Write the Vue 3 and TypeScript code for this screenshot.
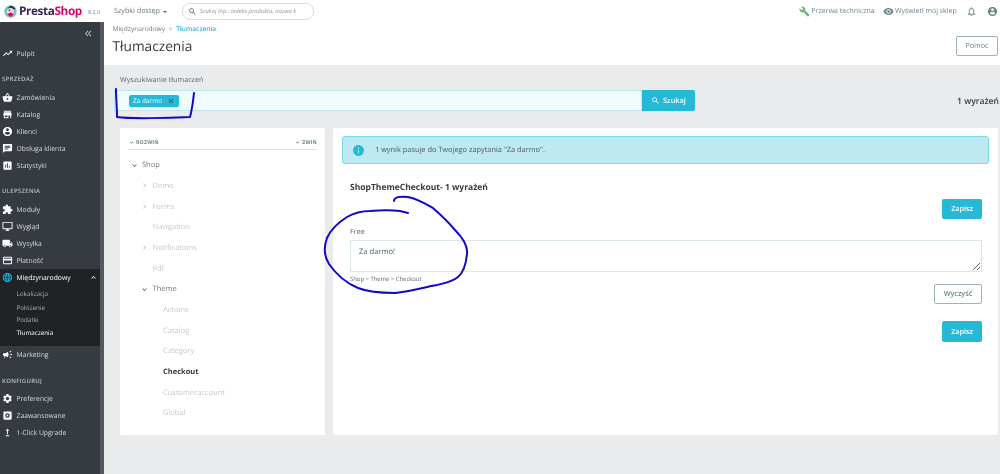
<script setup lang="ts">
const P: Record<string, string> = {
  trend: 'M16 6l2.29 2.29-4.88 4.88-4-4L2 16.59 3.41 18l6-6 4 4 6.3-6.29L22 12V6z',
  basket: 'M17.21 9l-4.38-6.56c-.19-.28-.51-.42-.83-.42-.32 0-.64.14-.83.43L6.79 9H2c-.55 0-1 .45-1 1 0 .09.01.18.04.27l2.54 9.27c.23.84 1 1.46 1.92 1.46h13c.92 0 1.69-.62 1.93-1.46l2.54-9.27L23 10c0-.55-.45-1-1-1h-4.79zM9 9l3-4.4L15 9H9zm3 8c-1.1 0-2-.9-2-2s.9-2 2-2 2 .9 2 2-.9 2-2 2z',
  store: 'M20 4H4v2h16V4zm1 10v-2l-1-5H4l-1 5v2h1v6h10v-6h4v6h2v-6h1zm-9 4H6v-4h6v4z',
  user: 'M12 2C6.48 2 2 6.48 2 12s4.48 10 10 10 10-4.48 10-10S17.52 2 12 2zm0 3c1.66 0 3 1.34 3 3s-1.34 3-3 3-3-1.34-3-3 1.34-3 3-3zm0 14.2c-2.5 0-4.71-1.28-6-3.22.03-1.99 4-3.08 6-3.08 1.99 0 5.97 1.09 6 3.08-1.29 1.94-3.5 3.22-6 3.22z',
  chat: 'M20 2H4c-1.1 0-1.99.9-1.99 2L2 22l4-4h14c1.1 0 2-.9 2-2V4c0-1.1-.9-2-2-2zM6 9h12v2H6V9zm8 5H6v-2h8v2zm4-6H6V6h12v2z',
  stats: 'M19 3H5c-1.1 0-2 .9-2 2v14c0 1.1.9 2 2 2h14c1.1 0 2-.9 2-2V5c0-1.1-.9-2-2-2zM9 17H7v-7h2v7zm4 0h-2V7h2v10zm4 0h-2v-4h2v4z',
  puzzle: 'M20.5 11H19V7c0-1.1-.9-2-2-2h-4V3.5C13 2.12 11.88 1 10.5 1S8 2.12 8 3.5V5H4c-1.1 0-1.99.9-1.99 2v3.8H3.5c1.49 0 2.7 1.21 2.7 2.7s-1.21 2.7-2.7 2.7H2V20c0 1.1.9 2 2 2h3.8v-1.5c0-1.49 1.21-2.7 2.7-2.7 1.49 0 2.7 1.21 2.7 2.7V22H17c1.1 0 2-.9 2-2v-4h1.5c1.38 0 2.5-1.12 2.5-2.5S21.88 11 20.5 11z',
  desktop: 'M21 2H3c-1.1 0-2 .9-2 2v12c0 1.1.9 2 2 2h7v2H8v2h8v-2h-2v-2h7c1.1 0 2-.9 2-2V4c0-1.1-.9-2-2-2zm0 14H3V4h18v12z',
  truck: 'M20 8h-3V4H3c-1.1 0-2 .9-2 2v11h2c0 1.66 1.34 3 3 3s3-1.34 3-3h6c0 1.66 1.34 3 3 3s3-1.34 3-3h2v-5l-3-4zM6 18.5c-.83 0-1.5-.67-1.5-1.5s.67-1.5 1.5-1.5 1.5.67 1.5 1.5-.67 1.5-1.5 1.5zm13.5-9l1.96 2.5H17V9.5h2.5zm-1.5 9c-.83 0-1.5-.67-1.5-1.5s.67-1.5 1.5-1.5 1.5.67 1.5 1.5-.67 1.5-1.5 1.5z',
  card: 'M20 4H4c-1.11 0-1.99.89-1.99 2L2 18c0 1.11.89 2 2 2h16c1.11 0 2-.89 2-2V6c0-1.11-.89-2-2-2zm0 14H4v-6h16v6zm0-10H4V6h16v2z',
  globe: 'M11.99 2C6.47 2 2 6.48 2 12s4.47 10 9.99 10C17.52 22 22 17.52 22 12S17.52 2 11.99 2zm6.93 6h-2.95c-.32-1.25-.78-2.45-1.38-3.56 1.84.63 3.37 1.91 4.33 3.56zM12 4.04c.83 1.2 1.48 2.53 1.91 3.96h-3.82c.43-1.43 1.08-2.76 1.91-3.96zM4.26 14C4.1 13.36 4 12.69 4 12s.1-1.36.26-2h3.38c-.08.66-.14 1.32-.14 2 0 .68.06 1.34.14 2H4.26zm.82 2h2.95c.32 1.25.78 2.45 1.38 3.56-1.84-.63-3.37-1.9-4.33-3.56zm2.95-8H5.08c.96-1.66 2.49-2.93 4.33-3.56C8.81 5.55 8.35 6.75 8.03 8zM12 19.96c-.83-1.2-1.48-2.53-1.91-3.96h3.82c-.43 1.43-1.08 2.76-1.91 3.96zM14.34 14H9.66c-.09-.66-.16-1.32-.16-2 0-.68.07-1.35.16-2h4.68c.09.65.16 1.32.16 2 0 .68-.07 1.34-.16 2zm.25 5.56c.6-1.11 1.06-2.31 1.38-3.56h2.95c-.96 1.65-2.49 2.93-4.33 3.56zM16.36 14c.08-.66.14-1.32.14-2 0-.68-.06-1.34-.14-2h3.38c.16.64.26 1.31.26 2s-.1 1.36-.26 2h-3.38z',
  horn: 'M18 11v2h4v-2h-4zm-2 6.61c.96.71 2.21 1.65 3.2 2.39.4-.53.8-1.07 1.2-1.6-.99-.74-2.24-1.68-3.2-2.4-.4.54-.8 1.08-1.2 1.61zM20.4 5.6c-.4-.53-.8-1.07-1.2-1.6-.99.74-2.24 1.68-3.2 2.4.4.53.8 1.07 1.2 1.6.96-.72 2.21-1.65 3.2-2.4zM4 9c-1.1 0-2 .9-2 2v2c0 1.1.9 2 2 2h1v4h2v-4h1l5 3V6L8 9H4zm11.5 3c0-1.33-.58-2.53-1.5-3.35v6.69c.92-.81 1.5-2.01 1.5-3.34z',
  gear: 'M19.14 12.94c.04-.3.06-.61.06-.94 0-.32-.02-.64-.07-.94l2.03-1.58c.18-.14.23-.41.12-.61l-1.92-3.32c-.12-.22-.37-.29-.59-.22l-2.39.96c-.5-.38-1.03-.7-1.62-.94l-.36-2.54c-.04-.24-.24-.41-.48-.41h-3.84c-.24 0-.43.17-.47.41l-.36 2.54c-.59.24-1.13.57-1.62.94l-2.39-.96c-.22-.08-.47 0-.59.22L2.74 8.87c-.12.21-.08.47.12.61l2.03 1.58c-.05.3-.09.63-.09.94s.02.64.07.94l-2.03 1.58c-.18.14-.23.41-.12.61l1.92 3.32c.12.22.37.29.59.22l2.39-.96c.5.38 1.03.7 1.62.94l.36 2.54c.05.24.24.41.48.41h3.84c.24 0 .44-.17.47-.41l.36-2.54c.59-.24 1.13-.56 1.62-.94l2.39.96c.22.08.47 0 .59-.22l1.92-3.32c.12-.22.07-.47-.12-.61l-2.01-1.58zM12 15.6c-1.98 0-3.6-1.62-3.6-3.6s1.62-3.6 3.6-3.6 3.6 1.62 3.6 3.6-1.62 3.6-3.6 3.6z',
  adv: 'M19 3H5c-1.1 0-2 .9-2 2v14c0 1.1.9 2 2 2h14c1.1 0 2-.9 2-2V5c0-1.1-.9-2-2-2zm-7 14a5 5 0 110-10 5 5 0 010 10zm0-3a2 2 0 100-4 2 2 0 000 4z',
  upgrade: 'M16 18v2H8v-2h8zM11 7.99V16h2V7.99h3L12 4 8 7.99h3z',
  wrench: 'M22.7 19l-9.1-9.1c.9-2.3.4-5-1.5-6.9-2-2-5-2.4-7.4-1.3L9 6 6 9 1.6 4.7C.4 7.1.9 10.1 2.9 12.1c1.9 1.9 4.6 2.4 6.9 1.5l9.1 9.1c.4.4 1 .4 1.4 0l2.3-2.3c.5-.4.5-1.1.1-1.4z',
  eye: 'M12 4.5C7 4.5 2.73 7.61 1 12c1.73 4.39 6 7.5 11 7.5s9.27-3.11 11-7.5c-1.73-4.39-6-7.5-11-7.5zM12 17c-2.76 0-5-2.24-5-5s2.24-5 5-5 5 2.24 5 5-2.24 5-5 5zm0-8c-1.66 0-3 1.34-3 3s1.34 3 3 3 3-1.34 3-3-1.34-3-3-3z',
  bell: 'M12 22c1.1 0 2-.9 2-2h-4c0 1.1.9 2 2 2zm6-6v-5c0-3.07-1.63-5.64-4.5-6.32V4c0-.83-.67-1.5-1.5-1.5s-1.5.67-1.5 1.5v.68C7.64 5.36 6 7.92 6 11v5l-2 2v1h16v-1l-2-2zm-2 1H8v-6c0-2.48 1.51-4.5 4-4.5s4 2.02 4 4.5v6z',
  search: 'M15.5 14h-.79l-.28-.27C15.41 12.59 16 11.11 16 9.5 16 5.91 13.09 3 9.5 3S3 5.91 3 9.5 5.91 16 9.5 16c1.61 0 3.09-.59 4.23-1.57l.27.28v.79l5 4.99L20.49 19l-4.99-5zm-6 0C7.01 14 5 11.99 5 9.5S7.01 5 9.5 5 14 7.01 14 9.5 11.99 14 9.5 14z',
  info: 'M12 2C6.48 2 2 6.48 2 12s4.48 10 10 10 10-4.48 10-10S17.52 2 12 2zm1 15h-2v-6h2v6zm0-8h-2V7h2v2z',
  close: 'M19 6.41L17.59 5 12 10.59 6.41 5 5 6.41 10.59 12 5 17.59 6.41 19 12 13.41 17.59 19 19 17.59 13.41 12z',
  down: 'M7.41 8.59L12 13.17l4.59-4.58L18 10l-6 6-6-6z',
  up: 'M7.41 15.41L12 10.83l4.59 4.58L18 14l-6-6-6 6z',
  right: 'M8.59 16.59L13.17 12 8.59 7.41 10 6l6 6-6 6z',
  dbl: 'M11.67 3.87L9.9 2.1 0 12l9.9 9.9 1.77-1.77L3.54 12zM21.67 3.87L19.9 2.1 10 12l9.9 9.9 1.77-1.77L13.54 12z'
}

interface Sec { title?: string; items: { label: string; icon: string; active?: boolean }[] }
const first: Sec[] = [
  { items: [{ label: 'Pulpit', icon: 'trend' }] },
  { title: 'SPRZEDAŻ', items: [
    { label: 'Zamówienia', icon: 'basket' }, { label: 'Katalog', icon: 'store' },
    { label: 'Klienci', icon: 'user' }, { label: 'Obsługa klienta', icon: 'chat' },
    { label: 'Statystyki', icon: 'stats' }] },
  { title: 'ULEPSZENIA', items: [
    { label: 'Moduły', icon: 'puzzle' }, { label: 'Wygląd', icon: 'desktop' },
    { label: 'Wysyłka', icon: 'truck' }, { label: 'Płatność', icon: 'card' }] }
]
const subItems = ['Lokalizacja', 'Położenie', 'Podatki', 'Tłumaczenia']
const configItems = [
  { label: 'Preferencje', icon: 'gear' },
  { label: 'Zaawansowane', icon: 'adv' },
  { label: '1-Click Upgrade', icon: 'upgrade' }
]
const tree = [
  { label: 'Demo', arrow: true }, { label: 'Forms', arrow: true }, { label: 'Navigation' },
  { label: 'Notifications', arrow: true }, { label: 'Pdf' }
]
const themeChildren = ['Actions', 'Catalog', 'Category', 'Checkout', 'Customeraccount', 'Global']
</script>

<template>
  <div class="app">
    <header class="top">
      <div class="logo">
        <svg class="logo-mark" viewBox="0 0 24 24">
          <circle cx="12" cy="12" r="11.5" fill="#6cc4cf" />
          <path d="M12 1.5a10.500 10.500 0 0 1 9 5L15 12l-8-6z" fill="#3b2a55" />
          <circle cx="12" cy="12" r="6.500" fill="#f4dfd8" />
          <path d="M6 17l6-3 6 3-6 5z" fill="#df0067" />
          <circle cx="10" cy="10" r="1.500" fill="#2b2b33" />
        </svg>
        <span class="logo-text"><span class="presta">Presta</span><span class="shop">Shop</span></span>
        <span class="version">8.2.0</span>
      </div>
      <div class="quick">Szybki dostęp <span class="caret"></span></div>
      <div class="top-search">
        <svg class="ico-search" viewBox="0 0 24 24"><path :d="P.search" /></svg>
        <span class="top-search-text">Szukaj (np.: indeks produktu, nazwa k</span>
      </div>
      <div class="top-right">
        <svg class="ti wrench" viewBox="0 0 24 24"><path :d="P.wrench" /></svg>
        <span class="tl tl-a">Przerwa techniczna</span>
        <svg class="ti eye" viewBox="0 0 24 24"><path :d="P.eye" /></svg>
        <span class="tl tl-b">Wyświetl mój sklep</span>
        <svg class="ti bell" viewBox="0 0 24 24"><path :d="P.bell" /></svg>
        <svg class="ti person" viewBox="0 0 24 24"><path :d="P.user" /></svg>
      </div>
    </header>

    <div class="body">
      <nav class="side">
        <div class="collapse">
          <svg viewBox="0 0 24 24"><path :d="P.dbl" /></svg>
        </div>
        <template v-for="s in first" :key="s.title ?? 'root'">
          <div v-if="s.title" class="sec">{{ s.title }}</div>
          <div v-for="i in s.items" :key="i.label" class="item">
            <svg viewBox="0 0 24 24"><path :d="P[i.icon]" /></svg>
            <span>{{ i.label }}</span>
          </div>
        </template>
        <div class="group">
          <div class="item item-active">
            <svg class="globe" viewBox="0 0 24 24"><path :d="P.globe" /></svg>
            <span>Międzynarodowy</span>
            <svg class="item-up" viewBox="0 0 24 24"><path :d="P.up" /></svg>
          </div>
          <div v-for="(l, n) in subItems" :key="l" class="sub" :class="{ 'sub-on': n === 3 }">{{ l }}</div>
        </div>
        <div class="item">
          <svg viewBox="0 0 24 24"><path :d="P.horn" /></svg>
          <span>Marketing</span>
        </div>
        <div class="sec sec-k">KONFIGURUJ</div>
        <div v-for="i in configItems" :key="i.label" class="item">
          <svg viewBox="0 0 24 24"><path :d="P[i.icon]" /></svg>
          <span>{{ i.label }}</span>
        </div>
      </nav>
      <div class="strip"></div>

      <main class="main">
        <section class="head">
          <div class="crumb">Międzynarodowy <span class="gt">&gt;</span> <span class="crumb-on">Tłumaczenia</span></div>
          <div class="title-row">
            <h1>Tłumaczenia</h1>
            <button class="btn-outline help">Pomoc</button>
          </div>
        </section>

        <section class="content">
          <div class="search-label">Wyszukiwanie tłumaczeń</div>
          <div class="search-row">
            <div class="search-input">
              <span class="tag">Za darmo <svg viewBox="0 0 24 24"><path :d="P.close" /></svg></span>
            </div>
            <button class="btn-search">
              <svg viewBox="0 0 24 24"><path :d="P.search" /></svg>Szukaj
            </button>
            <div class="count">1 wyrażeń</div>
          </div>

          <div class="cols">
            <aside class="card tree">
              <div class="tree-top">
                <span class="tt"><svg viewBox="0 0 24 24"><path :d="P.down" /></svg>ROZWIŃ</span>
                <span class="tt"><svg viewBox="0 0 24 24"><path :d="P.up" /></svg>ZWIŃ</span>
              </div>
              <div class="node n0"><svg class="arr dark" viewBox="0 0 24 24"><path :d="P.down" /></svg>Shop</div>
              <div v-for="t in tree" :key="t.label" class="node n1 off">
                <svg v-if="t.arrow" class="arr" viewBox="0 0 24 24"><path :d="P.right" /></svg>
                <span v-else class="arr"></span>{{ t.label }}
              </div>
              <div class="node n1"><svg class="arr dark" viewBox="0 0 24 24"><path :d="P.down" /></svg>Theme</div>
              <div v-for="c in themeChildren" :key="c" class="node n2 off" :class="{ sel: c === 'Checkout' }">{{ c }}</div>
            </aside>

            <article class="card result">
              <div class="alert">
                <svg viewBox="0 0 24 24"><path :d="P.info" /></svg>
                <span>1 wynik pasuje do Twojego zapytania "Za darmo".</span>
              </div>
              <div class="form">
                <h2>ShopThemeCheckout- 1 wyrażeń</h2>
                <div class="right"><button class="btn-save">Zapisz</button></div>
                <label class="free">Free</label>
                <textarea class="ta" readonly>Za darmo!</textarea>
                <div class="path">Shop &gt; Theme &gt; Checkout</div>
                <div class="right"><button class="btn-outline clear">Wyczyść</button></div>
                <div class="right last"><button class="btn-save">Zapisz</button></div>
              </div>
            </article>
          </div>
        </section>
      </main>
    </div>

    <svg class="ink" viewBox="0 0 1000 474">
      <path d="M116 89C116 98 117 108 117 117C130 119 170 118 190 117C192 110 193 102 194 93" />
      <path d="M394 201C394 197 400 196 408 197C418 199 426 204 433 208C442 216 450 224 455 230C463 238 468 246 467 254C466 264 464 272 458 277C452 282 445 283 437 285C425 287 412 291 395 293C380 293 368 292 358 288C346 283 336 274 329 264C324 256 324 246 327 238C331 229 339 222 347 217C354 213 361 211 370 211C382 210 392 210 400 211L408 213" />
    </svg>
  </div>
</template>

<style>
html, body { margin: 0; background: #fff; }
</style>

<style scoped>
.app {
  width: 1000px; height: 474px; overflow: hidden; position: relative;
  display: flex; flex-direction: column;
  font-family: "Open Sans", "Noto Sans", sans-serif; color: #363a41; background: #fff;
  text-rendering: geometricPrecision;
  filter: blur(0.3px);
}
svg { display: block; fill: currentColor; flex: none; }
button { font-family: inherit; cursor: pointer; padding: 0; text-rendering: inherit; }

/* top bar */
.top { height: 22px; flex: none; display: flex; align-items: center; background: #fff; }
.logo { display: flex; align-items: center; width: 114px; padding-left: 4px; box-sizing: border-box; }
.logo-mark { width: 13px; height: 13px; }
.logo-text { margin-left: 2px; width: 67px; font: 700 11.8px/22px "Open Sans", sans-serif; letter-spacing: -0.4px; white-space: nowrap; }
.presta { color: #3c1f5c; }
.shop { color: #df0067; }
.version { font-size: 5.5px; color: #6c868e; margin-left: 2px; margin-top: 2px; white-space: nowrap; }
.quick { width: 68px; font-size: 7.2px; color: #6c7a80; display: flex; align-items: center; gap: 3px; }
.caret { border: 2.2px solid transparent; border-top: 2.6px solid #5c6a70; border-bottom: 0; margin-top: 1px; }
.top-search {
  width: 132px; height: 17px; box-sizing: border-box; border: 1px solid #d3dde0; border-radius: 8px;
  display: flex; align-items: center; padding-left: 5px; gap: 3px; overflow: hidden;
}
.ico-search { width: 9px; height: 9px; color: #5c6a70; }
.top-search-text { font-size: 5.8px; font-style: italic; color: #8a979c; white-space: nowrap; }
.top-right { margin-left: auto; display: flex; align-items: center; padding-right: 2px; }
.ti { width: 11px; height: 11px; color: #6c868e; }
.wrench { color: #70b580; }
.tl { font-size: 7px; color: #6c868e; white-space: nowrap; }
.tl-a { margin-left: 1.5px; width: 71px; }
.tl-b { margin-left: 1.5px; width: 71px; }
.person { margin-left: 10px; }

.body { flex: 1; display: flex; min-height: 0; }

/* sidebar */
.side { width: 100px; flex: none; background: #363a41; color: #c9ced3; display: flex; flex-direction: column; }
.collapse { height: 23px; flex: none; display: flex; justify-content: flex-end; align-items: center; padding-right: 8px; color: #c9ced3; }
.collapse svg { width: 7px; height: 7px; }
.item { height: 17px; display: flex; align-items: center; padding-left: 2px; font-size: 6.8px; color: #d6dade; flex: none; }
.item svg { width: 11px; height: 11px; color: #fff; margin-right: 3.5px; }
.item .globe { color: #25b9d7; }
.item .item-up { width: 9px; height: 9px; margin: 0 2px 0 auto; }
.item-active { color: #fff; }
.sec { height: 10px; line-height: 10px; margin-top: 12px; margin-bottom: 5px; padding-left: 2px; font-size: 6px; font-weight: 600; letter-spacing: .3px; color: #b5c0c8; flex: none; }
.sec-k { margin-top: 13px; margin-bottom: 4px; }
.group { background: #202226; padding-bottom: 7px; flex: none; }
.sub { height: 13px; line-height: 13px; padding-left: 16.5px; font-size: 6.3px; color: #a8afb5; }
.sub:nth-child(2) { height: 15px; line-height: 15px; }
.sub:nth-child(4) { height: 12px; line-height: 12px; }
.sub-on { color: #fff; }
.strip { width: 3.5px; flex: none; background: #56595e; }

/* main */
.main { flex: 1; min-width: 0; display: flex; flex-direction: column; }
.head { height: 43px; flex: none; background: #fff; padding: 0 2px 0 9px; box-sizing: border-box; }
.crumb { font-size: 6.6px; line-height: 14px; color: #6c7a80; }
.gt { margin: 0 2px; color: #25b9d7; }
.crumb-on { color: #25b9d7; font-weight: 600; }
.title-row { display: flex; justify-content: space-between; align-items: flex-start; }
h1 { margin: 0; font-size: 13.7px; font-weight: 400; line-height: 21px; color: #363a41; }
.btn-outline { background: #fff; border: 1px solid #9fb2b9; border-radius: 2px; color: #6c868e; font-weight: 600; }
.help { width: 42px; height: 20px; font-size: 7.2px; font-weight: 400; }

.content { flex: 1; background: #eaebec; padding: 0 1px 0 10.5px; min-height: 0; }
.search-label { height: 25px; line-height: 31px; padding-left: 6px; font-size: 7.2px; color: #5c6a70; }
.search-row { display: flex; align-items: center; height: 21px; }
.search-input {
  width: 528px; height: 21px; box-sizing: border-box; background: #f0fbfd;
  border: 1px solid #bfe7f0; display: flex; align-items: center; padding-left: 14px;
}
.tag {
  display: flex; align-items: center; background: #25b9d7; color: #fff; height: 12px; padding: 0 4px;
  border-radius: 2px; font-size: 6.5px; width: 42px; justify-content: space-between; box-sizing: content-box;
}
.tag svg { width: 8px; height: 8px; color: #2a4a55; }
.btn-search {
  width: 53px; height: 21px; background: #25b9d7; border: 0; color: #fff; border-radius: 0 2px 2px 0;
  font-size: 7.4px; font-weight: 600; display: flex; align-items: center; justify-content: center; gap: 3px;
}
.btn-search svg { width: 9px; height: 9px; }
.count { margin-left: auto; font-size: 8.6px; font-weight: 600; color: #363a41; }

.cols { display: flex; gap: 8px; margin-top: 17px; padding-left: 6px; padding-right: 1px; }
.card { background: #fff; height: 307px; box-sizing: border-box; border-radius: 2px; }
.tree { width: 205px; flex: none; padding: 0 8px; }
.tree-top {
  height: 22px; box-sizing: border-box; border-bottom: 1px solid #dbe6e9; display: flex; justify-content: space-between;
  align-items: center; padding-top: 7px; margin-bottom: 5px; font-size: 5.2px; font-weight: 700; color: #6c868e; letter-spacing: .2px;
}
.tt { display: flex; align-items: center; gap: 1px; }
.tt svg { width: 7px; height: 7px; }
.node { height: 20.66px; display: flex; align-items: center; font-size: 7.5px; color: #6c7a80; white-space: nowrap; }
.n0 { padding-left: 2px; }
.n1 { padding-left: 12px; }
.n2 { padding-left: 35px; }
.arr { width: 9px; height: 9px; margin-right: 3px; color: #b5bec2; flex: none; }
.n1 .arr { margin-right: 3.5px; }
.arr.dark { color: #4a5458; }
.off { color: #c4cace; }
.sel { color: #363a41; font-weight: 700; }
.result { flex: 1; padding: 8px 9px 0; min-width: 0; }
.alert {
  height: 28px; box-sizing: border-box; background: #bde9f2; border: 1px solid #7fd5e8; border-radius: 3px;
  display: flex; align-items: center; padding-left: 9px; font-size: 7.4px; color: #4a5a60; gap: 10px;
}
.alert svg { width: 13px; height: 13px; color: #25b9d7; }
.form { padding: 18px 7px 0 8px; }
h2 { margin: 0; font-size: 8.5px; line-height: 12px; font-weight: 700; color: #363a41; }
.right { display: flex; justify-content: flex-end; }
.btn-save { width: 40px; height: 20px; margin-top: 5px; background: #25b9d7; border: 0; border-radius: 2px; color: #fff; font-size: 7.2px; font-weight: 600; }
.last .btn-save { height: 21px; margin-top: 17px; }
.free { display: block; font-size: 7.2px; line-height: 11px; margin-top: 7.500px; color: #5c6a70; }
.ta {
  display: block; width: 100%; height: 32px; box-sizing: border-box; margin: 2.500px 0 0; padding: 6px 8px; border: 1px solid #dbe6e9;
  font: 7.6px/11px "Open Sans", sans-serif; color: #4a5a60; outline: none; text-rendering: inherit;
}
.path { font-size: 5.9px; line-height: 9px; margin-top: 3px; color: #5c6a70; }
.clear { width: 48px; height: 20px; font-size: 7.2px; margin-top: 0; }

.ink { position: absolute; inset: 0; width: 1000px; height: 474px; pointer-events: none; fill: none; }
.ink path { fill: none; stroke: #1208c8; stroke-width: 2; stroke-linecap: round; stroke-linejoin: round; }
</style>
